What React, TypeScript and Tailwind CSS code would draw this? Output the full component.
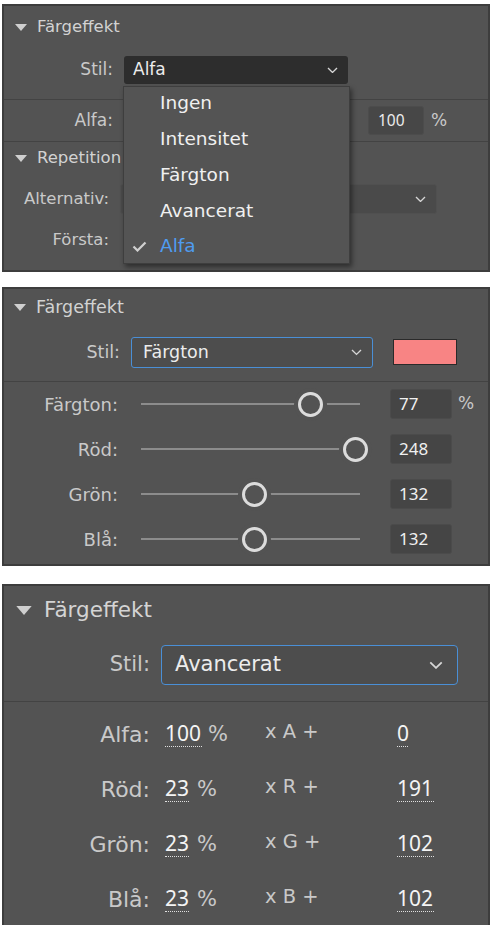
import React from "react";

const font = { fontFamily: '"DejaVu Sans", "Noto Sans", sans-serif' };

function Tri({ w = 12, h = 7 }: { w?: number; h?: number }) {
  return (
    <svg width={w} height={h} viewBox="0 0 12 7" className="shrink-0">
      <path d="M0 0 L12 0 L6 7 Z" fill="#cfcfcf" />
    </svg>
  );
}

function Chevron({ w = 11 }: { w?: number }) {
  return (
    <svg width={w} height={w * 0.6} viewBox="0 0 11 6.6" className="shrink-0">
      <path d="M1 1 L5.5 5.4 L10 1" fill="none" stroke="#d6d6d6" strokeWidth="1.4" />
    </svg>
  );
}

function Slider({ pos }: { pos: number }) {
  return (
    <div className="relative w-[219px] h-[30px] flex items-center">
      <div className="w-full h-[2px] bg-[#8c8c8c]" />
      <div
        className="absolute top-[2.5px] w-[25px] h-[25px] rounded-full border-[3px] border-[#dcdcdc] bg-[#535353] shadow-[0_0_0_4px_#535353]"
        style={{ left: pos - 12.5 }}
      />
    </div>
  );
}

function Panel1() {
  return (
    <div className="relative ml-[2px] mt-[3px] w-[488px] h-[268px] bg-[#535353] border-2 border-[#3d3d3d] text-[#c9c9c9]">
      <div className="h-[42px] flex items-center pl-[11px] gap-[10px]">
        <Tri />
        <span className="text-[16.5px] text-[#d2d2d2]">Färgeffekt</span>
      </div>
      <div className="h-[51px] pt-[8px] flex items-start">
        <div className="w-[109px] h-[28px] flex items-center justify-end text-[17px]">Stil:</div>
        <div className="ml-[11px] w-[224px] h-[28px] rounded-[3px] bg-[#2d2d2d] flex items-center justify-between pl-[9px] pr-[10px] text-[17px] text-[#ececec]">
          <span>Alfa</span>
          <Chevron />
        </div>
      </div>
      <div className="h-[1px] bg-[#434343]" />
      <div className="h-[41px] flex items-center">
        <div className="w-[109px] flex justify-end text-[17px]">Alfa:</div>
        <div className="ml-[255px] w-[56px] h-[29px] rounded-[3px] bg-[#474747] border border-[#4c4c4c] flex items-center pl-[9px] font-['Noto_Sans'] text-[15.5px] text-[#ececec]">100</div>
        <span className="ml-[7px] text-[17px]">%</span>
      </div>
      <div className="h-[1px] bg-[#434343]" />
      <div className="h-[32px] flex items-center pl-[11px] gap-[10px]">
        <Tri />
        <span className="text-[16.5px] text-[#d2d2d2]">Repetition</span>
      </div>
      <div className="h-[46px] pt-[10px] flex items-start">
        <div className="w-[105px] h-[30px] flex items-center justify-end text-[16.5px]">Alternativ:</div>
        <div className="ml-[11px] w-[317px] h-[30px] rounded-[3px] bg-[#4a4a4a] border border-[#505050] flex items-center justify-end pr-[10px]">
          <Chevron />
        </div>
      </div>
      <div className="h-[40px] flex items-center">
        <div className="w-[105px] flex justify-end text-[16.5px]">Första:</div>
      </div>

      <div className="absolute left-[119px] top-[80px] w-[227px] h-[178px] bg-[#545454] border border-[#3e3e3e] shadow-[2px_3px_5px_rgba(0,0,0,0.45)] text-[18.5px] text-[#f0f0f0]">
        <div className="flex flex-col -mt-[2px]">
          <div className="h-[36px] flex items-center pl-[36px]">Ingen</div>
          <div className="h-[36px] flex items-center pl-[36px]">Intensitet</div>
          <div className="h-[36px] flex items-center pl-[36px]">Färgton</div>
          <div className="h-[36px] flex items-center pl-[36px]">Avancerat</div>
          <div className="h-[34px] flex items-center pl-[8px] gap-[13px] text-[#4f9cf0]">
            <svg width="15" height="11" viewBox="0 0 15 11">
              <path d="M1.5 5.5 L5.5 9.5 L13.5 1.5" fill="none" stroke="#d0d0d0" strokeWidth="2.2" />
            </svg>
            <span>Alfa</span>
          </div>
        </div>
      </div>
    </div>
  );
}

function SliderRow({ label, pos, value, pct }: { label: string; pos: number; value: string; pct?: boolean }) {
  return (
    <div className="h-[30px] flex items-center">
      <div className="w-[114px] flex justify-end text-[18px]">{label}</div>
      <div className="ml-[23px]">
        <Slider pos={pos} />
      </div>
      <div className="ml-[30px] w-[62px] h-[30px] rounded-[3px] bg-[#454545] border border-[#4b4b4b] flex items-center pl-[8px] font-['Noto_Sans'] text-[17px] text-[#f0f0f0]">{value}</div>
      {pct && <span className="ml-[6px] text-[17px]">%</span>}
    </div>
  );
}

function Panel2() {
  return (
    <div className="ml-[2px] mt-[15px] w-[488px] h-[279px] bg-[#535353] border-2 border-[#3d3d3d] text-[#c9c9c9]">
      <div className="h-[36px] flex items-center pl-[10px] gap-[10px]">
        <Tri />
        <span className="text-[17.5px] text-[#d2d2d2]">Färgeffekt</span>
      </div>
      <div className="h-[56px] pt-[12px] flex items-start">
        <div className="w-[116px] h-[31px] flex items-center justify-end text-[17.5px]">Stil:</div>
        <div className="ml-[11px] w-[242px] h-[31px] rounded-[3px] border border-[#4a8fd6] bg-[#4d4d4d] flex items-center justify-between pl-[11px] pr-[10px] text-[17.5px] text-[#ececec]">
          <span>Färgton</span>
          <Chevron />
        </div>
        <div className="ml-[20px] mt-[2px] w-[64px] h-[26px] bg-[#f88484] border-[1.5px] border-[#2a2a2a]" />
      </div>
      <div className="h-[1px] bg-[#434343]" />
      <div className="pt-[7px] flex flex-col gap-[15px]">
        <SliderRow label="Färgton:" pos={169} value="77" pct />
        <SliderRow label="Röd:" pos={214} value="248" />
        <SliderRow label="Grön:" pos={113} value="132" />
        <SliderRow label="Blå:" pos={113} value="132" />
      </div>
    </div>
  );
}

function Dotted({ children, w }: { children: React.ReactNode; w: number }) {
  return (
    <span className="inline-flex flex-col items-start leading-none">
      <span className="text-[#f4f4f4] font-['Noto_Sans'] text-[21px]">{children}</span>
      <span className="mt-[2px] border-b-[1.5px] border-dotted border-[#e0e0e0]" style={{ width: w }} />
    </span>
  );
}

function AdvRow({ label, pct, pw, ch, val, vw, gap }: { label: string; pct: string; pw: number; ch: string; val: string; vw: number; gap: number }) {
  return (
    <div className="h-[55px] flex items-center">
      <div className="w-[146px] flex justify-end text-[22px]">{label}</div>
      <div className="ml-[15px] w-[100px] flex items-start" style={{ gap }}>
        <Dotted w={pw}>{pct}</Dotted>
        <span className="leading-none text-[21px] pt-[1px]">%</span>
      </div>
      <div className="w-[132px] leading-none text-[19.5px] pb-[5px]">x {ch} +</div>
      <Dotted w={vw}>{val}</Dotted>
    </div>
  );
}

function Panel3() {
  return (
    <div className="ml-[2px] mt-[18px] w-[488px] h-[341px] bg-[#535353] border-t-2 border-l-2 border-r-2 border-[#3d3d3d] text-[#c9c9c9]">
      <div className="h-[48px] flex items-center pl-[12px] gap-[12px]">
        <Tri w={16} h={9} />
        <span className="text-[21.5px] text-[#d4d4d4]">Färgeffekt</span>
      </div>
      <div className="h-[67px] pt-[11px] flex items-start">
        <div className="w-[146px] h-[40px] flex items-center justify-end text-[21px]">Stil:</div>
        <div className="ml-[11px] w-[297px] h-[40px] rounded-[4px] border-[1.5px] border-[#4a8fd6] bg-[#4d4d4d] flex items-center justify-between pl-[13px] pr-[14px] text-[21px] text-[#ececec]">
          <span>Avancerat</span>
          <Chevron w={14} />
        </div>
      </div>
      <div className="h-[1px] bg-[#434343]" />
      <div className="pt-[5px] flex flex-col">
        <AdvRow label="Alfa:" pct="100" pw={37} ch="A" val="0" vw={11} gap={6} />
        <AdvRow label="Röd:" pct="23" pw={24} ch="R" val="191" vw={37} gap={8} />
        <AdvRow label="Grön:" pct="23" pw={24} ch="G" val="102" vw={37} gap={8} />
        <AdvRow label="Blå:" pct="23" pw={24} ch="B" val="102" vw={37} gap={8} />
      </div>
    </div>
  );
}

export default function App() {
  return (
    <div className="w-[493px] h-[926px] bg-white overflow-hidden" style={font}>
      <div className="h-[1px]" />
      <Panel1 />
      <Panel2 />
      <Panel3 />
    </div>
  );
}
